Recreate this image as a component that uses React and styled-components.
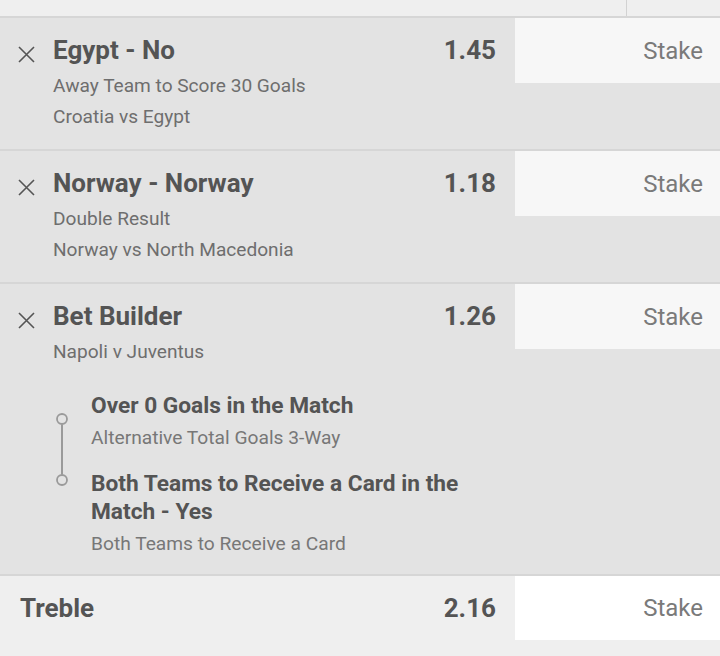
import React from 'react'
import styled, { createGlobalStyle } from 'styled-components'

const Global = createGlobalStyle`
  body {
    margin: 0;
    background: #efefef;
    font-family: Roboto, 'Liberation Sans', sans-serif;
  }
`

const Page = styled.div`
  width: 720px;
  height: 656px;
  overflow: hidden;
  background: #efefef;
`

const TopStrip = styled.div`
  height: 16px;
  display: flex;
  justify-content: flex-end;
  border-bottom: 2px solid #d6d6d6;
`

const StripCell = styled.div`
  width: 93px;
  border-left: 1px solid #d2d2d2;
`

const Bet = styled.section`
  display: flex;
  background: #e3e3e3;
  border-bottom: 2px solid #d6d6d6;
`

const Info = styled.div`
  flex: 1;
  padding: 16px 19px 17px 0;
`

const Head = styled.div`
  display: flex;
  align-items: center;
  height: 32px;
`

const Close = styled.button`
  width: 53px;
  height: 32px;
  padding: 0 0 0 18px;
  border: 0;
  background: none;
  display: flex;
  align-items: center;
  cursor: pointer;
  svg { margin-top: 8px; }
`

const Title = styled.h2`
  flex: 1;
  margin: 0;
  font-size: 26px;
  line-height: 32px;
  font-weight: 700;
  color: #545454;
`

const Odds = styled.span`
  font-size: 26px;
  line-height: 32px;
  font-weight: 700;
  color: #545454;
`

const Details = styled.div`
  margin-top: 4px;
  padding-left: 53px;
`

const Line = styled.div`
  font-size: 19.1px;
  line-height: 31px;
  color: #6e6e6e;
`

const Stake = styled.div`
  width: 205px;
  height: ${p => p.$h || 65}px;
  flex-shrink: 0;
  box-sizing: border-box;
  padding-right: 17px;
  display: flex;
  align-items: center;
  justify-content: flex-end;
  background: ${p => p.$bg || '#f7f7f7'};
  font-size: 24px;
  color: #7a7a7a;
`

const Legs = styled.div`
  display: flex;
  margin-top: 25px;
  padding-left: 53px;
`

const Timeline = styled.div`
  width: 36px;
  padding: 20px 0 0 2px;
`

const LegList = styled.div`
  flex: 1;
  display: flex;
  flex-direction: column;
  gap: 17px;
`

const LegTitle = styled.div`
  font-size: 22.7px;
  line-height: 28px;
  font-weight: 700;
  color: #545454;
`

const LegSub = styled.div`
  margin-top: 3px;
  font-size: 19.2px;
  line-height: 30px;
  color: #777;
`

const Treble = styled.section`
  display: flex;
  height: 80px;
  background: #efefef;
`

const TrebleInfo = styled.div`
  flex: 1;
  height: 64px;
  display: flex;
  align-items: center;
  padding: 0 19px 0 20px;
`

const CloseIcon = () => (
  <svg width="17" height="17" viewBox="0 0 17 17">
    <path d="M1 1L16 16M16 1L1 16" stroke="#555" strokeWidth="1.6" fill="none" />
  </svg>
)

const TimelineIcon = () => (
  <svg width="14" height="76" viewBox="0 0 14 76">
    <line x1="7" y1="12.5" x2="7" y2="62.5" stroke="#9a9a9a" strokeWidth="2" />
    <circle cx="7" cy="7" r="5" stroke="#9a9a9a" strokeWidth="1.8" fill="none" />
    <circle cx="7" cy="68" r="5" stroke="#9a9a9a" strokeWidth="1.8" fill="none" />
  </svg>
)

const bets = [
  { title: 'Egypt - No', odds: '1.45', lines: ['Away Team to Score 30 Goals', 'Croatia vs Egypt'] },
  { title: 'Norway - Norway', odds: '1.18', lines: ['Double Result', 'Norway vs North Macedonia'] },
]

const legs = [
  { title: 'Over 0 Goals in the Match', sub: 'Alternative Total Goals 3-Way' },
  { title: 'Both Teams to Receive a Card in the Match - Yes', sub: 'Both Teams to Receive a Card' },
]

function BetHead({ title, odds }) {
  return (
    <Head>
      <Close aria-label="Remove"><CloseIcon /></Close>
      <Title>{title}</Title>
      <Odds>{odds}</Odds>
    </Head>
  )
}

export default function App() {
  return (
    <Page>
      <Global />
      <TopStrip><StripCell /></TopStrip>

      {bets.map(b => (
        <Bet key={b.title}>
          <Info>
            <BetHead title={b.title} odds={b.odds} />
            <Details>
              {b.lines.map(l => <Line key={l}>{l}</Line>)}
            </Details>
          </Info>
          <Stake>Stake</Stake>
        </Bet>
      ))}

      <Bet>
        <Info style={{ paddingBottom: 15 }}>
          <BetHead title="Bet Builder" odds="1.26" />
          <Details>
            <Line>Napoli v Juventus</Line>
          </Details>
          <Legs>
            <Timeline><TimelineIcon /></Timeline>
            <LegList>
              {legs.map(l => (
                <div key={l.title}>
                  <LegTitle>{l.title}</LegTitle>
                  <LegSub>{l.sub}</LegSub>
                </div>
              ))}
            </LegList>
          </Legs>
        </Info>
        <Stake>Stake</Stake>
      </Bet>

      <Treble>
        <TrebleInfo>
          <Title>Treble</Title>
          <Odds>2.16</Odds>
        </TrebleInfo>
        <Stake $bg="#fff" $h={64}>Stake</Stake>
      </Treble>
    </Page>
  )
}
